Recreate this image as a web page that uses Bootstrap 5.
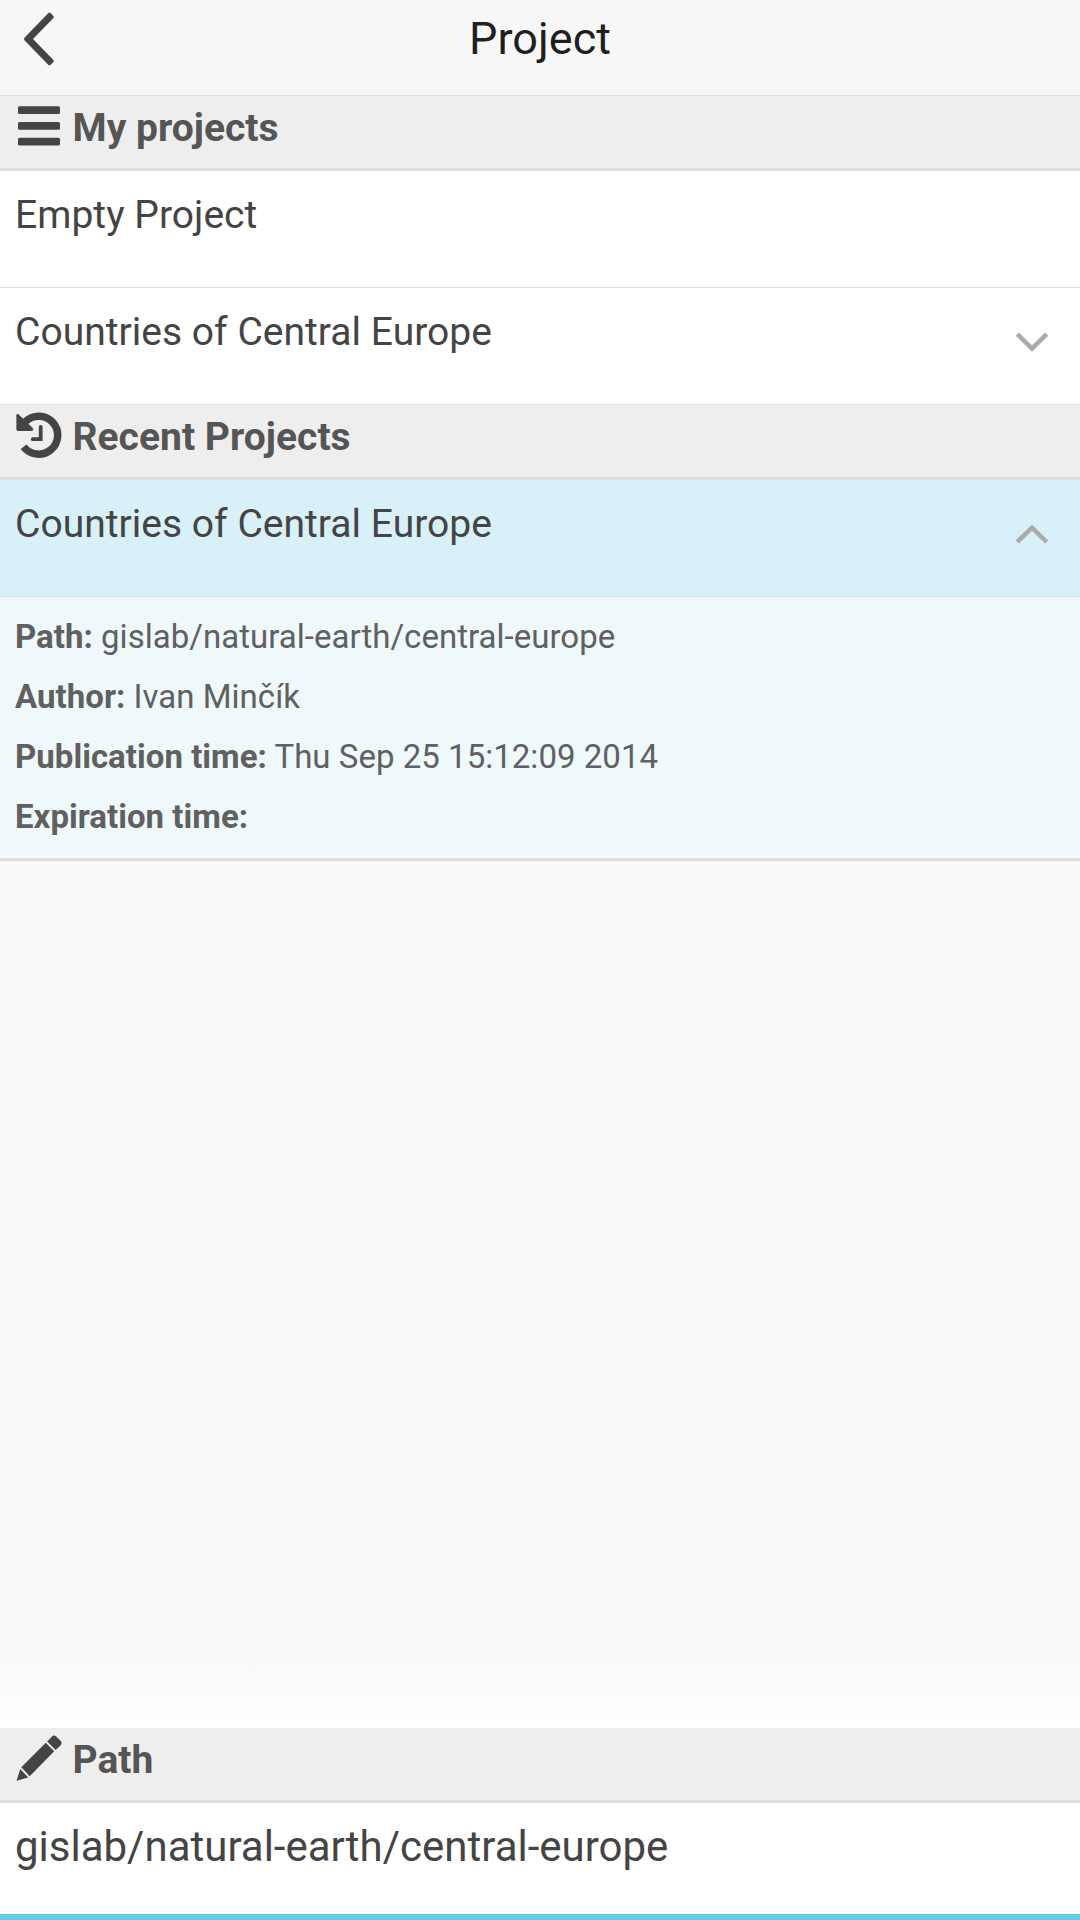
<!DOCTYPE html>
<html lang="en">
<head>
<meta charset="utf-8">
<meta name="viewport" content="width=device-width, initial-scale=1">
<title>Project</title>
<link rel="stylesheet" href="https://cdn.jsdelivr.net/npm/bootstrap@5.3.0/dist/css/bootstrap.min.css">
<style>
body{font-family:Roboto,"Noto Sans",sans-serif;font-size:39px;line-height:60px;letter-spacing:.025px;color:#444;background:#f9f9f9}
svg{display:block;flex:none}
.app-header{height:96px;padding:9px 15px 0 24px;background:#f7f7f7;border-bottom:1px solid #dcdcdc}
.app-header h1{font-size:45px;line-height:60px;font-weight:400;color:#1f1f21}
.app-header .back-btn{width:32px;height:55px;margin-top:3px;color:#444}
.app-header .side-space{width:41px}
.group-title{height:75px;padding:2px 15px 0;background:#eee;border-bottom:3px solid #ddd;font-size:39px;line-height:60px;font-weight:700;color:#555;gap:9.5px}
.group-title svg{width:48px;height:48px;margin-top:4px;color:#444}
.list-group>.project-row{height:117px;padding:14px 30px 0 15px;color:#444;border-width:0 0 1px;border-color:#ddd;background:#fff}
.list-group>.project-row.selected{background:#d8f0f7}
.project-row svg{width:36px;height:24px;margin-top:27px}
.project-info{height:264px;padding:10px 15px 0;background:#eff8fb;border-bottom:3px solid #ddd;font-size:33px;color:#606060}
.fade-area{background:linear-gradient(to bottom,#f9f9f9,#f9f9f9 calc(100% - 75px),#fff)}
.path-input{height:111px;padding:10px 15px 34px;border:0;border-radius:0;background:#fff;color:#444;font-size:42px;line-height:60px}
.bottom-bar{height:6px;background:#6acce4}
</style>
<script src="https://cdn.jsdelivr.net/npm/bootstrap@5.3.0/dist/js/bootstrap.bundle.min.js"></script>
</head>
<body>
<div class="d-flex flex-column vh-100 overflow-hidden">
  <header class="app-header d-flex justify-content-between align-items-start flex-shrink-0">
    <button class="back-btn btn p-0 border-0" type="button" aria-label="Back">
      <svg width="32" height="55" viewBox="0 0 32 55" fill="currentColor"><path d="M24.200 1.200Q25.500 0 26.800 1.200L29.200 3.700Q30.500 5 29.200 6.300L9 27L29.200 47.700Q30.500 49 29.200 50.300L26.800 52.700Q25.500 54 24.200 52.700L.7 28.400Q-.7 27 .7 25.600Z"/></svg>
    </button>
    <h1 class="m-0">Project</h1>
    <span class="side-space"></span>
  </header>

  <section class="flex-shrink-0">
    <div class="group-title d-flex align-items-start">
      <svg viewBox="0 0 48 48" fill="currentColor"><rect x="3" y="4.300" width="42" height="7.800" rx="1.500"/><rect x="3" y="20" width="42" height="7.800" rx="1.500"/><rect x="3" y="35.700" width="42" height="7.800" rx="1.500"/></svg>
      <span>My projects</span>
    </div>
    <div class="list-group rounded-0">
      <a class="list-group-item project-row rounded-0 d-flex justify-content-between align-items-start"><span>Empty Project</span></a>
      <a class="list-group-item project-row rounded-0 d-flex justify-content-between align-items-start">
        <span>Countries of Central Europe</span>
        <svg viewBox="0 0 36 24" fill="none" stroke="#aaa" stroke-width="4.500"><path d="M3.300 5.200L18 19.600L32.700 5.200"/></svg>
      </a>
    </div>
  </section>

  <section class="flex-shrink-0">
    <div class="group-title d-flex align-items-start">
      <svg viewBox="0 0 48 48" fill="none"><path d="M8.600 34.200A19 19 0 1 0 10.300 9.200" transform="translate(0 1.500)" stroke="currentColor" stroke-width="7.500"/><path d="M1.400 4.600Q1.400 1.500 3.700 3.400L17.500 16.800Q19.400 19.700 16.500 19.900H3Q1.400 19.900 1.400 18.300Z" fill="currentColor"/><path d="M25.700 15.800V28.200H17.800" stroke="currentColor" stroke-width="3.800" stroke-linecap="round"/></svg>
      <span>Recent Projects</span>
    </div>
    <div class="list-group rounded-0">
      <a class="list-group-item project-row selected rounded-0 d-flex justify-content-between align-items-start">
        <span>Countries of Central Europe</span>
        <svg viewBox="0 0 36 24" fill="none" stroke="#aaa" stroke-width="4.500"><path d="M3.300 21L18 6.600L32.700 21"/></svg>
      </a>
    </div>
    <div class="project-info">
      <div><strong>Path:</strong> gislab/natural-earth/central-europe</div>
      <div><strong>Author:</strong> Ivan Minčík</div>
      <div><strong>Publication time:</strong> Thu Sep 25 15:12:09 2014</div>
      <div><strong>Expiration time:</strong></div>
    </div>
  </section>

  <div class="fade-area flex-grow-1"></div>

  <section class="flex-shrink-0">
    <div class="group-title d-flex align-items-start">
      <svg viewBox="0 0 48 48" fill="currentColor"><path d="M1.500 46.700L5.300 35L13.200 43.500Z"/><path d="M6.300 33.300L30.800 8.700L39.200 17.300L14.700 42.200Z"/><path d="M32.200 7.500L37 2.500Q39 .5 41.200 2.500L45.500 6.800Q47.700 9 45.700 11.300L40.600 16.100Z"/></svg>
      <span>Path</span>
    </div>
    <input class="path-input form-control shadow-none" type="text" value="gislab/natural-earth/central-europe" aria-label="Path">
    <div class="bottom-bar"></div>
  </section>
</div>
</body>
</html>
